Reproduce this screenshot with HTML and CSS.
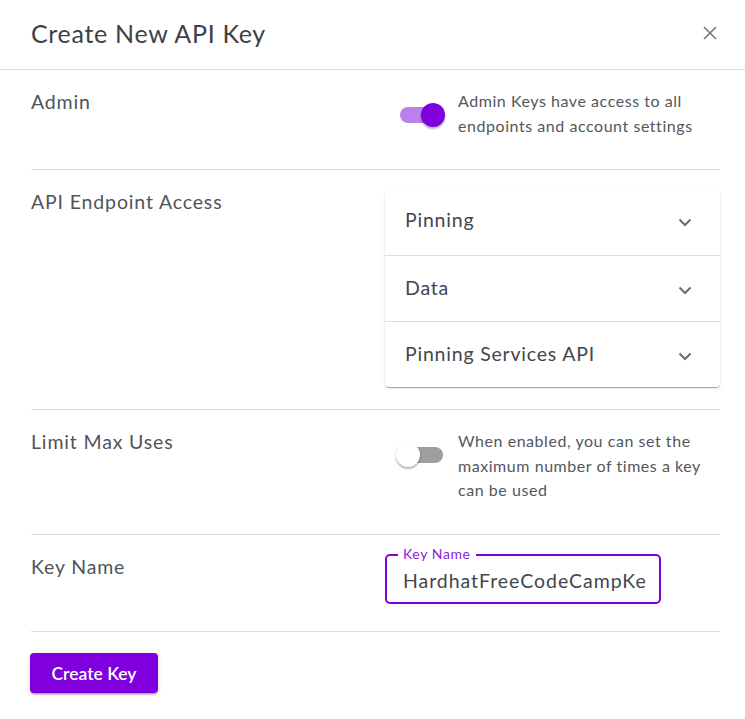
FILE: index.html
```html
<!DOCTYPE html>
<html lang="en">
<head>
<meta charset="utf-8">
<title>Create New API Key</title>
<link rel="stylesheet" href="styles.css">
</head>
<body>
<div class="dialog">
  <header class="head">
    <h2 class="title">Create New API Key</h2>
    <button class="close" aria-label="Close">
      <svg width="14" height="14" viewBox="0 0 14 14"><path d="M1 1L13 13M13 1L1 13" stroke="#757575" stroke-width="1.6" fill="none"/></svg>
    </button>
  </header>
  <div class="body">
    <section class="row row-admin">
      <div class="label">Admin</div>
      <div class="ctrl">
        <span class="switch on"><span class="track"></span><span class="thumb"></span></span>
        <p class="desc">Admin Keys have access to all endpoints and account settings</p>
      </div>
    </section>
    <section class="row row-access">
      <div class="label">API Endpoint Access</div>
      <div class="ctrl">
        <div class="accordion">
          <div class="acc-item"><span>Pinning</span><svg class="chev" width="14" height="9" viewBox="0 0 14 9"><path d="M1.5 1.5L7 7L12.5 1.5" stroke="#6b6b6b" stroke-width="2" fill="none"/></svg></div>
          <div class="acc-item"><span>Data</span><svg class="chev" width="14" height="9" viewBox="0 0 14 9"><path d="M1.5 1.5L7 7L12.5 1.5" stroke="#6b6b6b" stroke-width="2" fill="none"/></svg></div>
          <div class="acc-item"><span>Pinning Services API</span><svg class="chev" width="14" height="9" viewBox="0 0 14 9"><path d="M1.5 1.5L7 7L12.5 1.5" stroke="#6b6b6b" stroke-width="2" fill="none"/></svg></div>
        </div>
      </div>
    </section>
    <section class="row row-limit">
      <div class="label">Limit Max Uses</div>
      <div class="ctrl">
        <span class="switch off"><span class="track"></span><span class="thumb"></span></span>
        <p class="desc">When enabled, you can set the maximum number of times a key can be used</p>
      </div>
    </section>
    <section class="row row-name">
      <div class="label">Key Name</div>
      <div class="ctrl">
        <div class="field">
          <span class="legend">Key Name</span>
          <div class="input">HardhatFreeCodeCampKe</div>
        </div>
      </div>
    </section>
  </div>
  <footer class="foot">
    <button class="create">Create Key</button>
  </footer>
</div>
</body>
</html>
```

FILE: styles.css
```css
* { box-sizing: border-box; }
html, body { margin: 0; padding: 0; background: #fff; }
body {
  font-family: "Lato", "Open Sans", sans-serif;
  color: #4a4e55;
  width: 745px;
  height: 719px;
  overflow: hidden;
}
.dialog { width: 745px; }
.head {
  height: 70px;
  border-bottom: 1px solid #dedede;
  display: flex;
  align-items: center;
  justify-content: space-between;
  padding: 0 25px 4px 31px;
}
.title {
  margin: 0;
  font-size: 25px;
  font-weight: 400;
  color: #3d4148;
  letter-spacing: 0.7px;
}
.close {
  border: 0;
  background: none;
  padding: 0;
  width: 20px;
  height: 20px;
  display: flex;
  align-items: center;
  justify-content: center;
  cursor: pointer;
}
.body { padding: 0 25px 0 31px; }
.row {
  display: grid;
  grid-template-columns: 354px 335px;
  border-bottom: 1px solid #dedede;
  padding-top: 20px;
}
.row-admin { height: 100px; }
.row-access { height: 240px; }
.row-limit { height: 125px; }
.row-name { height: 97px; }
.label {
  font-size: 19.5px;
  line-height: 24px;
  color: #50545b;
  letter-spacing: 0.85px;
}
.ctrl { display: flex; align-items: flex-start; }
.switch {
  position: relative;
  flex: none;
  width: 49px;
  height: 26px;
  margin: 12px 13px 0 11px;
}
.switch .track {
  position: absolute;
  left: 4px;
  right: 2px;
  top: 5px;
  height: 16px;
  border-radius: 8px;
  background: #9e9e9e;
}
.switch.on .track { background: #bb80ec; }
.switch .thumb {
  position: absolute;
  top: 1px;
  width: 24px;
  height: 24px;
  border-radius: 50%;
  background: #fff;
  box-shadow: 0 2px 2px rgba(0,0,0,0.22), 0 1px 3px rgba(0,0,0,0.14);
}
.switch.off .thumb { left: 0; }
.switch.on .thumb { left: 25px; background: #7f00dc; }
.desc {
  margin: -1px 0 0;
  font-size: 16px;
  line-height: 24.5px;
  color: #53575d;
  letter-spacing: 0.55px;
  width: 252px;
}
.accordion {
  width: 335px;
  border-radius: 4px;
  background: #fff;
  box-shadow: 0 2px 1px -1px rgba(0,0,0,0.2), 0 1px 1px 0 rgba(0,0,0,0.14), 0 1px 3px 0 rgba(0,0,0,0.12);
}
.acc-item {
  height: 66px;
  display: flex;
  align-items: center;
  justify-content: space-between;
  padding: 0 28px 0 20px;
  font-size: 19.5px;
  letter-spacing: 0.8px;
  color: #42464c;
  border-top: 1px solid #dedede;
}
.acc-item:first-child { border-top: 0; height: 65px; padding-bottom: 6px; }
.acc-item:nth-child(2) { padding-bottom: 3px; }
.acc-item:nth-child(3) { padding-bottom: 2px; }
.chev { margin-top: 6px; }
.field {
  position: relative;
  width: 276px;
  height: 50px;
  border: 2px solid #7f00dc;
  border-radius: 5px;
  margin-top: -1px;
}
.legend {
  position: absolute;
  top: -10px;
  left: 11px;
  padding: 0 5px;
  background: #fff;
  font-size: 14px;
  letter-spacing: 0.6px;
  line-height: 16px;
  color: #8a1be0;
}
.input {
  padding: 2px 14px 0 16px;
  line-height: 46px;
  font-size: 19.5px;
  letter-spacing: 0.95px;
  color: #42464c;
  white-space: nowrap;
  overflow: hidden;
}
.foot { padding: 21px 31px 0 30px; }
.create {
  width: 128px;
  height: 40px;
  border: 0;
  border-radius: 4px;
  background: #7f00dc;
  color: #fff;
  font-family: "Lato", sans-serif;
  font-size: 17.5px;
  font-weight: 600;
  box-shadow: 0 3px 1px -2px rgba(0,0,0,0.2), 0 2px 2px 0 rgba(0,0,0,0.14), 0 1px 5px 0 rgba(0,0,0,0.12);
  cursor: pointer;
}
```
